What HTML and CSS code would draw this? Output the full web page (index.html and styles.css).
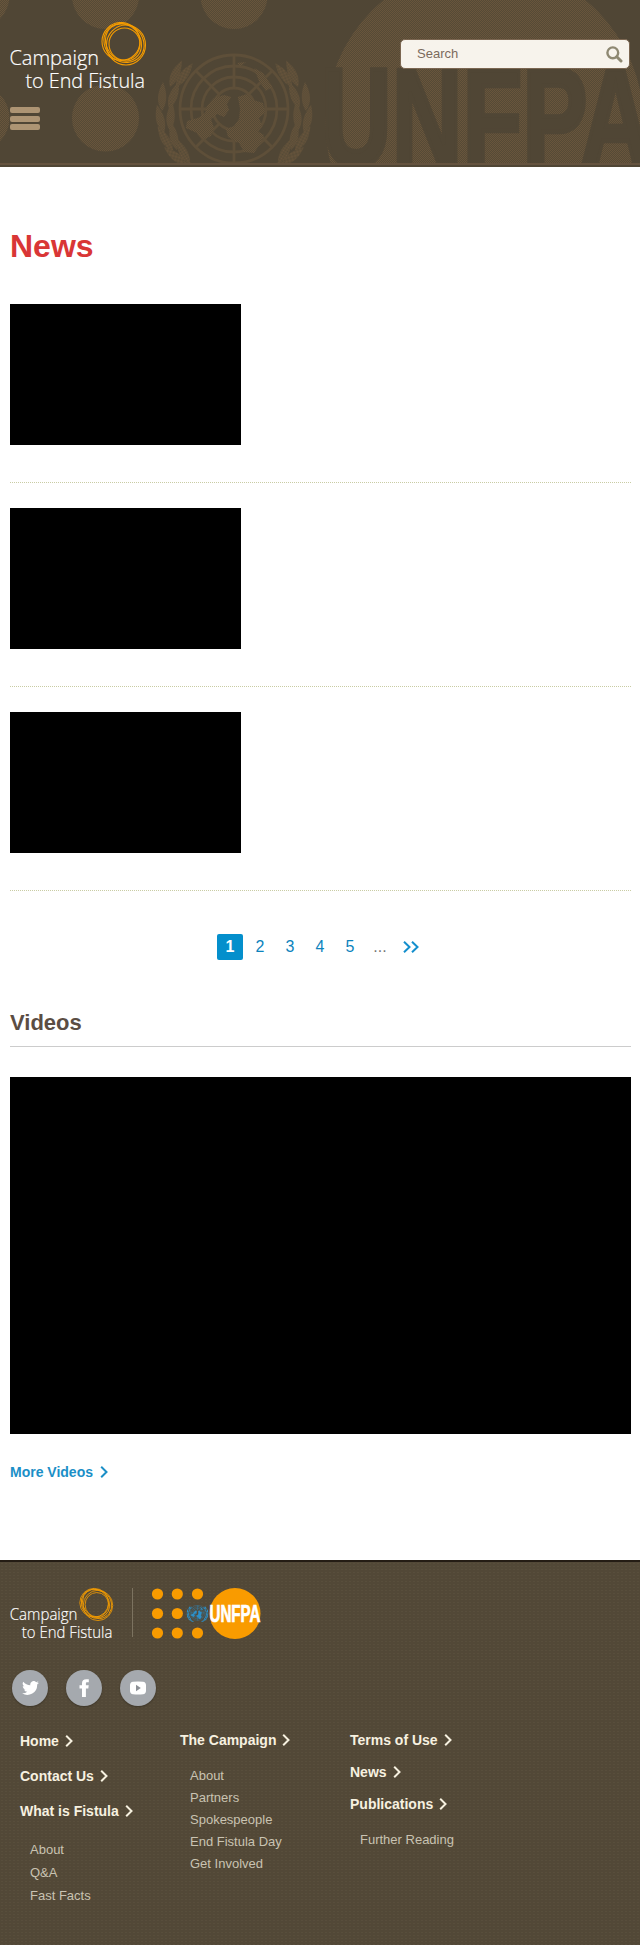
FILE: index.html
```html
<!DOCTYPE html>
<html lang="en">
<head>
<meta charset="utf-8">
<title>News - Campaign to End Fistula</title>
<link rel="stylesheet" href="styles.css">
</head>
<body>
<svg class="defs" width="0" height="0" aria-hidden="true">
  <defs>
    <pattern id="check" width="2" height="2" patternUnits="userSpaceOnUse">
      <rect width="2" height="2" fill="#554a36"/>
      <rect width="1" height="1" fill="#69553c"/>
      <rect x="1" y="1" width="1" height="1" fill="#69553c"/>
    </pattern>
    <path id="leaf" d="M0 0C-6 -8 -6 -17 0 -29C5 -18 5 -8 0 0Z"/>
    <g id="laurel">
      <use href="#leaf" transform="translate(-64 -22) rotate(24)"/>
      <use href="#leaf" transform="translate(-58 -22) rotate(35)"/>
      <use href="#leaf" transform="translate(-72 2) rotate(2)"/>
      <use href="#leaf" transform="translate(-65 0) rotate(20)"/>
      <use href="#leaf" transform="translate(-70 24) rotate(-14)"/>
      <use href="#leaf" transform="translate(-64 22) rotate(4)"/>
      <use href="#leaf" transform="translate(-61 42) rotate(-32)"/>
      <use href="#leaf" transform="translate(-57 41) rotate(-12)"/>
      <use href="#leaf" transform="translate(-47 56) rotate(-52)"/>
      <use href="#leaf" transform="translate(-44 55) rotate(-28)"/>
      <use href="#leaf" transform="translate(-26 64) rotate(-68)"/>
    </g>
    <symbol id="emblem" viewBox="-79 -56 158 124">
      <g class="emblem-lines" fill="none" stroke-width="2.800">
        <circle r="54"/><circle r="43"/><circle r="32"/><circle r="21"/>
        <path d="M-54 0H-20M20 0H54M0 -54V-20M0 20V54M-38 -38L-14 -14M38 -38L14 -14M-38 38L-14 14M38 38L14 14"/>
      </g>
      <g stroke="none">
        <path d="M-27 -3L-20 -11L-10 -14L-3 -12L-7 -5L-5 1L-10 8L-17 5L-23 10L-20 19L-23 27L-30 30L-37 24L-48 19L-47 12L-36 9L-29 4Z"/>
        <path d="M4 -12L13 -15L19 -9L29 -6L31 4L25 9L28 17L23 22L30 26L26 35L20 44L10 43L5 34L-6 28L-8 20L0 17L5 10L6 0Z"/>
        <path d="M20 -41L29 -36L38 -22L32 -18L25 -28ZM3 -46L12 -47L7 -43Z"/>
        <use href="#laurel"/>
        <use href="#laurel" transform="scale(-1 1)"/>
      </g>
    </symbol>
    <symbol id="logo" viewBox="0 0 137 70">
      <g class="logo-text">
        <text x="-.5" y="42.5" textLength="89.5" lengthAdjust="spacingAndGlyphs">Campaign</text>
        <text x="15.5" y="66" textLength="119.5" lengthAdjust="spacingAndGlyphs">to End Fistula</text>
      </g>
      <g fill="none" stroke="#f59c00" stroke-width="1.1">
        <ellipse cx="111" cy="19.500" rx="19" ry="19"/>
        <ellipse cx="113.500" cy="20.500" rx="19.500" ry="17" transform="rotate(52 113.500 20.500)"/>
        <ellipse cx="116" cy="23" rx="19.500" ry="20"/>
        <ellipse cx="114.500" cy="22" rx="15.500" ry="16"/>
        <ellipse cx="114" cy="21" rx="21" ry="18.500" transform="rotate(38 114 21)"/>
      </g>
    </symbol>
    <symbol id="chev" viewBox="0 0 8 12"><path d="M1.200 .8L6.500 6L1.200 11.200" fill="none" stroke="currentColor" stroke-width="2"/></symbol>
  </defs>
</svg>

<header class="header">
  <svg class="header-art" width="640" height="163" viewBox="0 0 640 163" aria-hidden="true">
    <g fill="url(#check)">
      <circle cx="-24" cy="-4.500" r="33.500"/><circle cx="105.500" cy="-4.500" r="33.500"/><circle cx="234" cy="-4.500" r="33.500"/>
      <circle cx="-24" cy="118" r="33.500"/><circle cx="105.500" cy="118" r="33.500"/>
      <circle cx="484.500" cy="123" r="159"/>
    </g>
    <use href="#emblem" x="155" y="53" width="158" height="124" class="header-emblem"/>
    <text class="header-word" x="321" y="166" textLength="330" lengthAdjust="spacingAndGlyphs">UNFPA</text>
  </svg>
  <div class="header-main">
    <a class="brand" href="#"><svg width="137" height="70"><use href="#logo"/></svg></a>
    <button class="menu" aria-label="Menu"><span></span><span></span><span></span></button>
  </div>
  <form class="search">
    <span>Search</span>
    <svg width="17" height="17" viewBox="0 0 17 17" fill="none" stroke="#8e8872"><circle cx="6.800" cy="6.800" r="5.400" stroke-width="2.400"/><path d="M10.800 10.800L15 15" stroke-width="3" stroke-linecap="round"/></svg>
  </form>
</header>

<main class="main">
  <h1>News</h1>
  <article class="item"><div class="thumb"></div></article>
  <article class="item"><div class="thumb"></div></article>
  <article class="item"><div class="thumb"></div></article>
  <nav class="pager">
    <b>1</b><a>2</a><a>3</a><a>4</a><a>5</a><i>...</i>
    <a><svg width="16" height="12" viewBox="0 0 16 12" fill="none" stroke="currentColor" stroke-width="2"><path d="M1 .8L6.500 6L1 11.200M9 .8L14.500 6L9 11.200"/></svg></a>
  </nav>
  <h2>Videos</h2>
  <div class="video"></div>
  <a class="more">More Videos <svg width="8" height="12"><use href="#chev"/></svg></a>
</main>

<footer class="footer">
  <div class="logos">
    <svg width="104" height="53"><use href="#logo"/></svg>
    <span class="divider"></span>
    <svg class="unfpa" width="112" height="52" viewBox="151 1588 112 52">
      <g fill="#f99b00">
        <circle cx="157.500" cy="1594" r="5.600"/><circle cx="177.300" cy="1594" r="5.600"/><circle cx="197.500" cy="1594" r="5.600"/>
        <circle cx="157.500" cy="1613.500" r="5.600"/><circle cx="177.300" cy="1613.500" r="5.600"/>
        <circle cx="157.500" cy="1633" r="5.600"/><circle cx="177.300" cy="1633" r="5.600"/><circle cx="197.500" cy="1633" r="5.600"/>
        <circle cx="235" cy="1613.500" r="25.500"/>
      </g>
      <use href="#emblem" x="186.500" y="1605" width="22" height="17.300" class="blue"/>
      <text class="unfpa-word" x="209.500" y="1621.500" textLength="51" lengthAdjust="spacingAndGlyphs">UNFPA</text>
    </svg>
  </div>
  <div class="social">
    <a aria-label="Twitter"><svg width="17" height="14" viewBox="0 0 24 20"><path fill="#fff" d="M24 2.400a9 9 0 0 1-2.800.8A5 5 0 0 0 23.300.5a10 10 0 0 1-3.100 1.200 4.900 4.900 0 0 0-8.400 4.500A14 14 0 0 1 1.700 1a4.900 4.900 0 0 0 1.500 6.600A5 5 0 0 1 1 7a4.900 4.900 0 0 0 3.900 4.900 5 5 0 0 1-2.200.1 4.900 4.900 0 0 0 4.600 3.400A10 10 0 0 1 0 17.500 14 14 0 0 0 21.500 5a10 10 0 0 0 2.500-2.600z"/></svg></a>
    <a aria-label="Facebook"><svg width="11" height="18" viewBox="0 0 11 18"><path fill="#fff" d="M3 18V9.500H.5V6.300H3V4.300C3 1.500 4.600.2 7.200.2H9.800V3.300H8.200C7.200 3.300 6.900 3.700 6.900 4.700V6.300H9.700L9.300 9.500H6.900V18Z"/></svg></a>
    <a aria-label="YouTube"><svg width="18" height="14" viewBox="0 0 18 14"><path fill="#fff" d="M4 .8Q9 0 14 .8Q16.800 1 17 4V10Q16.800 13 14 13.200Q9 14 4 13.200Q1.200 13 1 10V4Q1.200 1 4 .8Z"/><path fill="#8d9196" d="M7 3.800V10.200L11.800 7Z"/></svg></a>
  </div>
  <div class="links">
    <div class="col wide">
      <a>Home<svg width="8" height="12"><use href="#chev"/></svg></a>
      <a>Contact Us<svg width="8" height="12"><use href="#chev"/></svg></a>
      <a>What is Fistula<svg width="8" height="12"><use href="#chev"/></svg></a>
      <ul><li>About</li><li>Q&amp;A</li><li>Fast Facts</li></ul>
    </div>
    <div class="col">
      <a>The Campaign<svg width="8" height="12"><use href="#chev"/></svg></a>
      <ul><li>About</li><li>Partners</li><li>Spokespeople</li><li>End Fistula Day</li><li>Get Involved</li></ul>
    </div>
    <div class="col">
      <a>Terms of Use<svg width="8" height="12"><use href="#chev"/></svg></a>
      <a>News<svg width="8" height="12"><use href="#chev"/></svg></a>
      <a>Publications<svg width="8" height="12"><use href="#chev"/></svg></a>
      <ul><li>Further Reading</li></ul>
    </div>
  </div>
</footer>
</body>
</html>
```
FILE: styles.css
```css
* { box-sizing: border-box; }
body { margin: 0; background: #fff; font-family: "Liberation Sans", Arial, sans-serif; width: 640px; }
svg { display: block; }
.defs { position: absolute; }

.header { position: relative; height: 167px; background: #504635; display: flex; justify-content: space-between; padding: 22px 10px 0 10px; }
.header::after { content: ""; position: absolute; left: 0; right: 0; top: 163px; height: 2px; background: #65533f; }
.header-art { position: absolute; left: 0; top: 0; }
.header-emblem { fill: url(#check); --line: #5e4f39; }
.emblem-lines { stroke: var(--line); }
.header-word { font: bold 139px "Liberation Sans", Arial, sans-serif; fill: #504635; stroke: #504635; stroke-width: 4.500px; }
.header-main { position: relative; }
.logo-text { font: 300 21px "Open Sans", "Noto Sans", sans-serif; fill: #fff; stroke: #fff; stroke-width: .2px; }
.brand { display: block; }
.menu { display: flex; flex-direction: column; gap: 2.500px; margin: 15px 0 0; padding: 0; border: 0; background: none; width: 30px; }
.menu span { height: 6px; width: 30px; border-radius: 2px; background: #ad9473; }
.search { position: relative; display: flex; align-items: center; justify-content: space-between; width: 230px; height: 30px; margin-top: 17px; padding: 0 6px 0 16px; border: 1px solid #7b6651; border-radius: 5px; background: #f7f3ec; color: #7b6a5c; font-size: 13px; }
.search span { padding-bottom: 2px; }

.main { height: 1393px; padding: 59px 9px 0 10px; }
h1 { margin: 0 0 38px; font-size: 32px; line-height: 40px; color: #d93636; }
.item { height: 179px; margin-bottom: 25px; border-bottom: 1px dotted #c9cca4; }
.thumb { width: 231px; height: 141px; background: #000; }
.pager { display: flex; gap: 4px; margin: 43px 0 0 207px; height: 26px; font-size: 16px; line-height: 26px; color: #0c83bd; }
.pager > * { width: 26px; text-align: center; display: flex; align-items: center; justify-content: center; }
.pager b { background: #048fcc; color: #fff; border-radius: 2px; }
.pager i { font-style: normal; color: #777; }
.pager svg { color: #148fcd; margin-left: 2px; }
h2 { margin: 48px 0 30px; height: 39px; border-bottom: 1px solid #ccc; font-size: 22px; line-height: 29px; color: #5b4d43; }
.video { height: 357px; background: #000; }
.more { display: flex; align-items: center; gap: 7px; margin-top: 29px; color: #1b8fc7; font-size: 14px; font-weight: bold; line-height: 18px; }

.footer { height: 385px; border-top: 2px solid #241c14; padding: 26px 10px 0; background-color: #524837; background-image: radial-gradient(#584e3c 0.500px, transparent 0.700px); background-size: 4px 3px; }
.logos { display: flex; height: 53px; }
.divider { width: 1px; height: 49px; margin: 0 18px 0 18px; background: #7c7360; }
.blue { fill: #2b8fc8; --line: #2b86b8; }
.unfpa-word { font: bold 23px "Liberation Sans", Arial, sans-serif; fill: #fff; stroke: #fff; stroke-width: .7px; }
.social { display: flex; gap: 18px; margin: 29px 0 0 2px; }
.social a { width: 36px; height: 36px; border-radius: 50%; background: #a5a9ae; box-shadow: 0 1px 2px #0004; display: flex; align-items: center; justify-content: center; }
.links { display: grid; grid-template-columns: 160px 170px 1fr; margin: 18px 0 0 10px; }
.col a { display: flex; align-items: center; gap: 6px; height: 32px; font-size: 14px; font-weight: bold; color: #f7f1e0; }
.col ul { list-style: none; margin: 9px 0 0; padding: 0 0 0 10px; font-size: 13px; line-height: 22px; color: #c9c3b2; }
.wide a { height: 35px; padding-bottom: 2px; }
.wide ul { line-height: 23px; }
```
